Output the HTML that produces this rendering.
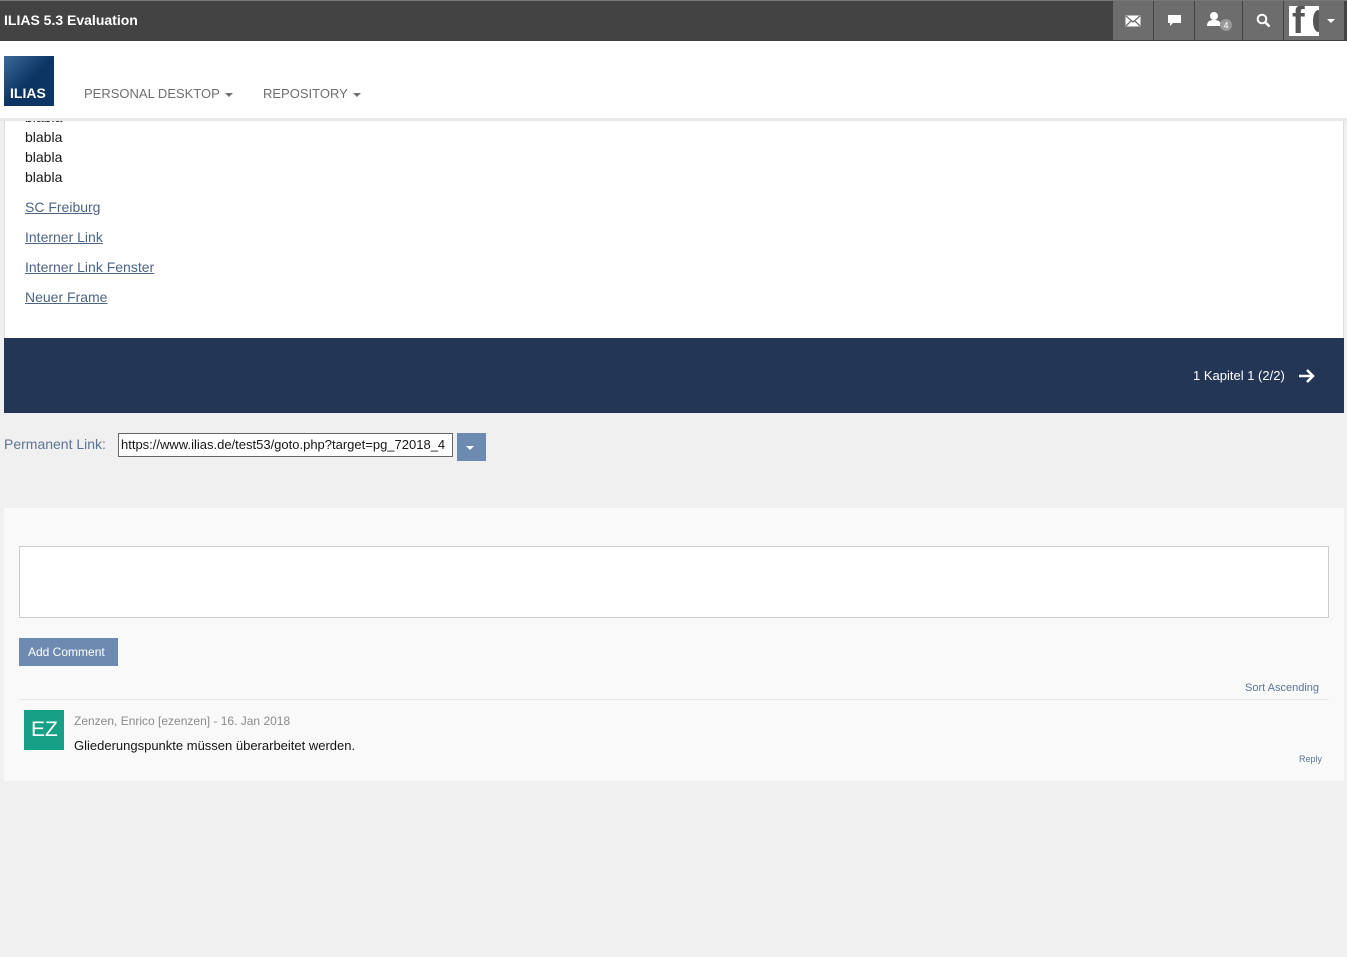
<!DOCTYPE html>
<html><head><meta charset="utf-8"><style>
*{box-sizing:border-box;margin:0;padding:0}
body{width:1347px;height:957px;background:#f0f0f0;font-family:"Liberation Sans",sans-serif;position:relative;overflow:hidden;font-size:14px;color:#161616}
.abs{position:absolute}
.top{left:0;top:0;width:1347px;height:41px;background:#434343;border-top:1px solid #777;z-index:3}
.top .t{left:4px;top:11px;color:#fff;font-weight:bold;font-size:14px}
.ic{top:1px;height:39px;background:#6d6d6d;display:flex;align-items:center;justify-content:center;z-index:4}
.hdr{left:0;top:41px;width:1347px;height:80px;background:#fff;border-bottom:3px solid #e8e8e8;z-index:2}
.logo{left:4px;top:15px;width:50px;height:50px;background:linear-gradient(135deg,#3c6a9b,#0c3563 50%);color:#fff;font-weight:bold;font-size:14px;padding:29px 0 0 6px}
.nav{top:45px;color:#6f6f6f;font-size:13px}
.car{display:inline-block;border-left:4px solid transparent;border-right:4px solid transparent;border-top:4px solid #6f6f6f;vertical-align:middle;margin-left:5px}
.content{left:4px;top:104px;width:1340px;height:234px;background:#fff;border-left:1px solid #ddd;border-right:1px solid #ddd}
.content div{position:absolute;left:20px;font-size:14px}
.content a{color:#4c6586;text-decoration:underline}
.band{left:4px;top:338px;width:1340px;height:75px;background:#243656}
.cm{left:4px;top:508px;width:1340px;height:273px;background:#f9f9f9}
</style></head><body>
<div class="abs top"><div class="abs t">ILIAS 5.3 Evaluation</div></div>
<div class="abs ic" style="left:1113px;width:40px"><svg width="16" height="12"><rect x="0.5" y="0.5" width="15" height="11" fill="#fff"/><path d="M1 1L8 7L15 1M1 11L6 6M15 11L10 6" stroke="#6d6d6d" fill="none" stroke-width="1.3"/></svg></div>
<div class="abs ic" style="left:1154px;width:40px"><svg width="15" height="13"><path d="M1 1h13v8H6l-3 3v-3H1z" fill="#fff"/></svg></div>
<div class="abs ic" style="left:1195px;width:47px"><svg width="28" height="22"><circle cx="9" cy="6" r="4" fill="#fff"/><path d="M2 16c0-5 3-6 7-6s7 1 7 6z" fill="#fff"/><circle cx="21" cy="15" r="6" fill="#999"/><text x="21" y="18.5" font-size="9" fill="#fff" text-anchor="middle" font-family="Liberation Sans">4</text></svg></div>
<div class="abs ic" style="left:1243px;width:40px"><svg width="15" height="15"><circle cx="6" cy="6" r="4.3" stroke="#fff" stroke-width="2" fill="none"/><path d="M9 9l4.5 4.5" stroke="#fff" stroke-width="2.5"/></svg></div>
<div class="abs ic" style="left:1284px;width:60px;justify-content:flex-start;padding-left:5px"><div style="width:30px;height:30px;background:#fff;position:relative;overflow:hidden"><span style="position:absolute;left:3px;top:-6px;font-size:38px;font-weight:bold;color:#555;font-family:'Liberation Sans'">f</span><span style="position:absolute;left:24px;top:4px;width:10px;height:22px;border-radius:50%;background:#555"></span></div><span class="car" style="border-top-color:#fff;margin-left:8px"></span></div>
<div class="abs hdr">
<div class="abs logo">ILIAS</div>
<div class="abs nav" style="left:84px">PERSONAL DESKTOP<span class="car"></span></div>
<div class="abs nav" style="left:263px">REPOSITORY<span class="car"></span></div>
</div>
<div class="abs content">
<div style="top:5px">blabla</div>
<div style="top:25px">blabla</div>
<div style="top:45px">blabla</div>
<div style="top:65px">blabla</div>
<div style="top:95px"><a>SC Freiburg</a></div>
<div style="top:125px"><a>Interner Link</a></div>
<div style="top:155px"><a>Interner Link Fenster</a></div>
<div style="top:185px"><a>Neuer Frame</a></div>
</div>
<div class="abs band"><div class="abs" style="left:1189px;top:30px;color:#fff;font-size:13px">1 Kapitel 1 (2/2)</div>
<svg class="abs" style="left:1294px;top:30px" width="18" height="16"><path d="M1 8h14M9 2l6 6-6 6" stroke="#fff" stroke-width="2.5" fill="none"/></svg></div>
<div class="abs" style="left:4px;top:436px;color:#5b7595;font-size:14px">Permanent Link:</div>
<div class="abs" style="left:118px;top:433px;width:335px;height:24px;background:#fff;border:1px solid #666;font-size:13px;padding:3px 2px;overflow:hidden;white-space:nowrap">https://www.ilias.de/test53/goto.php?target=pg_72018_4</div>
<div class="abs" style="left:457px;top:433px;width:29px;height:28px;background:#6d8bb0"><span class="car" style="border-top-color:#fff;position:absolute;left:9px;top:13px;margin:0"></span></div>
<div class="abs cm">
<div class="abs" style="left:15px;top:38px;width:1310px;height:72px;background:#fff;border:1px solid #ccc"></div>
<div class="abs" style="left:15px;top:130px;width:99px;height:28px;background:#6d8bb0;color:#fff;font-size:12px;padding:7px 0 0 9px">Add Comment</div>
<div class="abs" style="left:1241px;top:174px;color:#5b7595;font-size:11px">Sort Ascending</div>
<div class="abs" style="left:15px;top:191px;width:1310px;height:1px;background:#e8e8e8"></div>
<div class="abs" style="left:20px;top:202px;width:40px;height:40px;background:#17a085;color:#fff;font-size:21px;padding:8px 0 0 7px">EZ</div>
<div class="abs" style="left:70px;top:206px;color:#8a8a8a;font-size:12px">Zenzen, Enrico [ezenzen] - 16. Jan 2018</div>
<div class="abs" style="left:70px;top:230px;font-size:13px">Gliederungspunkte müssen überarbeitet werden.</div>
<div class="abs" style="left:1295px;top:246px;color:#5b7595;font-size:9px">Reply</div>
</div>
</body></html>
